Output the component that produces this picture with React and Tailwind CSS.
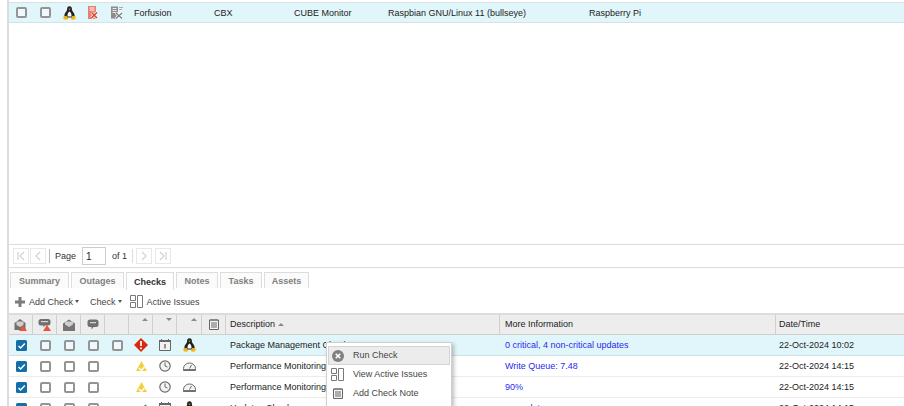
import React from "react";

const COLS = "grid grid-cols-[24px_24px_24px_24px_24px_24px_24px_25px_24px_274px_276px_1fr]";

function Box({ checked }) {
  if (checked)
    return (
      <svg width="11" height="11" viewBox="0 0 11 11" className="block">
        <rect x="0" y="0" width="11" height="11" rx="1.5" fill="#146ea8" />
        <path d="M2.5 6 L4.6 8 L8.8 3.4" fill="none" stroke="#fff" strokeWidth="1.5" />
      </svg>
    );
  return <div className="w-[11px] h-[11px] rounded-[2px] border-2 border-[#949494] bg-white/40" />;
}

const Tux = () => (
  <svg width="13" height="14" viewBox="0 0 13 14" className="block">
    <path d="M6.500 .3C4.500 .3 4 1.800 4.100 3.300 4.200 4.800 2.800 5.700 2 7.300 1.300 8.700 1.200 10.200 1.800 11.500h9.400c.6-1.300.5-2.800-.2-4.200C10.200 5.700 8.800 4.800 8.900 3.300 9 1.800 8.500 .3 6.500 .3z" fill="#222" />
    <path d="M6.500 5.500C5.200 6 4.300 8 4.500 10.500h4C8.700 8 7.800 6 6.500 5.500z" fill="#fff" />
    <path d="M5.300 2.800h2.400L6.500 4.100z" fill="#f1b312" />
    <path d="M.3 10.500 3.500 9.800l1.600 2.700-1 1.200-3.500-.5zM12.700 10.500 9.500 9.800l-1.600 2.700 1 1.200 3.500-.5z" fill="#f3b40f" />
  </svg>
);

const ServerX = () => (
  <svg width="10" height="13" viewBox="0 0 10 13" className="block">
    <path d="M0 0h8v13H0z" fill="#e8806e" />
    <path d="M1.500 2h5M1.500 4h5" stroke="#fff" strokeWidth="1" />
    <path d="M3.500 6.500 9 12M9 6.500 3.500 12" stroke="#fff" strokeWidth="3" />
    <path d="M3.500 6.500 9 12M9 6.500 3.500 12" stroke="#d9432e" strokeWidth="1.500" />
  </svg>
);

const ServerGray = () => (
  <svg width="12" height="13" viewBox="0 0 12 13" className="block">
    <path d="M0 .5h7v12H0z" fill="#8d8d8d" />
    <path d="M1.500 2.500h4M1.500 4.500h4M1.500 6.500h4" stroke="#e8e8e8" />
    <path d="M5 7 11 12.500M11 7 5 12.500" stroke="#fff" strokeWidth="3" />
    <path d="M5 7 11 12.500M11 7 5 12.500" stroke="#777" strokeWidth="1.200" />
    <path d="M8 1.500h4M8 3.500h3" stroke="#aaa" />
  </svg>
);

const MailX = () => (
  <svg width="13" height="13" viewBox="0 0 13 13" className="block">
    <path d="M.5 5 6 1l5.500 4v7H.5z" fill="#707070" />
    <path d="M2.500 3.500h7V7L6 9 2.500 7z" fill="#cfcfcf" />
    <path d="M9 7 13 13H5z" fill="#e4553f" />
  </svg>
);
const BubbleX = () => (
  <svg width="13" height="13" viewBox="0 0 13 13" className="block">
    <path d="M3 1h7a2.500 2.500 0 0 1 2.500 2.500V5A2.500 2.500 0 0 1 10 7.500H7L5.500 9.500V7.500H3A2.500 2.500 0 0 1 .5 5V3.500A2.500 2.500 0 0 1 3 1z" fill="#707070" />
    <path d="M3 3.700h7" stroke="#eee" strokeWidth="1" />
    <path d="M9 7 13 13H5z" fill="#e4553f" />
  </svg>
);
const Mail = () => (
  <svg width="12" height="12" viewBox="0 0 12 12" className="block">
    <path d="M0 4.500 6 .5l6 4V12H0z" fill="#757575" />
    <path d="M2 2.500h8v3L6 8 2 5.500z" fill="#cfcfcf" />
  </svg>
);
const Bubble = () => (
  <svg width="12" height="11" viewBox="0 0 12 11" className="block">
    <path d="M3 .5h6A2.500 2.500 0 0 1 11.500 3v2.500A2.500 2.500 0 0 1 9 8H6.500L4.500 10.500V8H3A2.500 2.500 0 0 1 .5 5.500V3A2.500 2.500 0 0 1 3 .5z" fill="#707070" />
    <path d="M3 3.700h6" stroke="#eee" />
  </svg>
);
const Notes = () => (
  <svg width="10" height="11" viewBox="0 0 10 11" className="block">
    <path d="M.5 1h9v9.500h-9z" fill="#f4f4f4" stroke="#666" />
    <path d="M2 0v2M4 0v2M6 0v2M8 0v2" stroke="#666" />
    <path d="M2 4h6M2 6h6M2 8h6" stroke="#666" />
  </svg>
);
const Up = () => <div className="w-0 h-0 border-x-[3px] border-x-transparent border-b-[3px] border-b-[#8a8a8a]" />;
const Down = () => <div className="w-0 h-0 border-x-[3px] border-x-transparent border-t-[3px] border-t-[#8a8a8a]" />;
const Diamond = () => (
  <svg width="14" height="14" viewBox="0 0 14 14" className="block">
    <path d="M7 0 14 7 7 14 0 7z" fill="#d92a0e" />
    <path d="M7 3v5M7 9.500v1.800" stroke="#fff" strokeWidth="1.700" />
  </svg>
);
const Cal = () => (
  <svg width="12" height="12" viewBox="0 0 12 12" className="block">
    <path d="M.5 1.500h11v10H.5z" fill="#f2f2f2" stroke="#666" />
    <path d="M0 1h12v2H0z" fill="#666" />
    <path d="M2.500 0v2M9.500 0v2" stroke="#666" />
    <path d="M6 5v4.500" stroke="#555" strokeWidth="1.200" />
  </svg>
);
const Warn = () => (
  <svg width="11" height="11" viewBox="0 0 11 11" className="block">
    <path d="M5.500 0 11 10H0z" fill="#f2cf3d" />
    <path d="M3 7 5.500 9.500 8.500 6" fill="none" stroke="#fff" strokeWidth="1.500" />
  </svg>
);
const Clock = () => (
  <svg width="12" height="12" viewBox="0 0 12 12" className="block">
    <circle cx="6" cy="6" r="5.200" fill="#f4f4f4" stroke="#6a6a6a" strokeWidth="1.200" />
    <path d="M6 2.500V6l2.500 1" fill="none" stroke="#6a6a6a" />
  </svg>
);
const Gauge = () => (
  <svg width="13" height="9" viewBox="0 0 13 9" className="block">
    <path d="M.5 8.500V6.500A6 5.500 0 0 1 12.500 6.500v2z" fill="#f4f4f4" stroke="#666" />
    <path d="M6.500 6.500 8.500 3" stroke="#666" />
    <path d="M.5 7h12v1.500H.5z" fill="#777" />
  </svg>
);
const Panels = () => (
  <svg width="13" height="13" viewBox="0 0 13 13" className="block">
    <path d="M.5.500h5v5h-5zM.5 7.500h5v5h-5zM7.500.500h5v12h-5z" fill="#fff" stroke="#7a7a7a" />
  </svg>
);
const XCircle = () => (
  <svg width="12" height="12" viewBox="0 0 12 12" className="block">
    <circle cx="6" cy="6" r="6" fill="#808080" />
    <path d="M3.700 3.700 8.300 8.300M8.300 3.700 3.700 8.300" stroke="#fff" strokeWidth="1.600" />
  </svg>
);
const Caret = () => <div className="w-0 h-0 border-x-[2px] border-x-transparent border-t-[3px] border-t-[#555]" />;

function HCell({ children, sort }) {
  return (
    <div
      className={
        "flex border-r border-[#cfcfcf] " +
        (sort ? "items-start justify-end pr-[4px] pt-[3px]" : "items-center justify-center")
      }
    >
      {children}
    </div>
  );
}
function Cell({ children }) {
  return <div className="flex items-center justify-center">{children}</div>;
}

function Row({ hi, extra, sev, kind, type, desc, info, date }) {
  return (
    <div
      className={
        COLS +
        " h-[21px] border-b " +
        (hi ? "bg-[#e1f6fa] border-[#cfe0e2]" : "bg-white border-[#ececec]")
      }
    >
      <Cell><Box checked /></Cell>
      <Cell><Box /></Cell>
      <Cell><Box /></Cell>
      <Cell><Box /></Cell>
      <Cell>{extra && <Box />}</Cell>
      <Cell>{sev}</Cell>
      <Cell>{kind}</Cell>
      <Cell>{type}</Cell>
      <Cell />
      <div className="flex items-center pl-[4px] pt-px text-[#222] overflow-hidden whitespace-nowrap">{desc}</div>
      <div className="flex items-center pl-[5px] pt-px text-[#2a2aee] whitespace-nowrap">{info}</div>
      <div className="flex items-center pl-[3px] pt-px text-[#222] whitespace-nowrap">{date}</div>
    </div>
  );
}

function Tab({ children, active, w }) {
  return (
    <div
      className={
        w +
        " border border-b-0 border-[#ddd] flex items-center justify-center font-bold pt-px " +
        (active ? "h-[18px] text-[#333] bg-white" : "h-[16px] text-[#808080] bg-[#fbfbfb]")
      }
    >
      {children}
    </div>
  );
}

function PageBtn({ path, className = "" }) {
  return (
    <div className={"w-[16px] h-[16px] border border-[#e8e8e8] flex items-center justify-center " + className}>
      <svg width="10" height="10" viewBox="0 0 10 10" className="block">
        <path d={path} fill="none" stroke="#d2d2d2" strokeWidth="1.200" />
      </svg>
    </div>
  );
}

function MenuItem({ icon, label, active }) {
  return (
    <div
      className={
        "flex items-center h-[19px] " +
        (active ? "bg-[#ececec] border border-[#d4d4d4]" : "pl-px")
      }
    >
      <div className="w-[17px] flex items-center justify-center">{icon}</div>
      <div className="pl-[7px] text-[#444]">{label}</div>
    </div>
  );
}

export default function App() {
  return (
    <div
      className="relative w-[904px] h-[406px] overflow-hidden bg-white text-[9px] leading-none text-[#222]"
      style={{ fontFamily: '"Liberation Sans", Arial, sans-serif' }}
    >
      <div className="h-[406px] ml-[7px] border-l-2 border-[#dcdcdc] overflow-hidden">
        {/* Upper grid */}
        <div className="h-[2px]" />
        <div className="h-[21px] bg-[#e1f6fa] border-y border-[#d6e2e4] flex items-center">
          <div className="w-[24px] flex justify-center"><Box /></div>
          <div className="w-[24px] flex justify-center"><Box /></div>
          <div className="w-[24px] flex justify-center"><Tux /></div>
          <div className="w-[24px] flex justify-center"><ServerX /></div>
          <div className="w-[24px] flex justify-center"><ServerGray /></div>
          <div className="w-[85px] pl-[5px] pt-px">Forfusion</div>
          <div className="w-[80px] pt-px">CBX</div>
          <div className="w-[94px] pt-px">CUBE Monitor</div>
          <div className="w-[201px] pt-px">Raspbian GNU/Linux 11 (bullseye)</div>
          <div className="pt-px">Raspberry Pi</div>
        </div>
        <div className="h-[221px]" />
        {/* Pagination */}
        <div className="h-[24px] border-y border-[#dcdcdc] flex items-center pl-[4px]">
          <PageBtn path="M2 1v8M8 1 4 5l4 4" />
          <PageBtn path="M7 1 3 5l4 4" className="ml-[1px]" />
          <div className="w-px h-[14px] bg-[#bbb] ml-[3px]" />
          <span className="ml-[5px] pt-px text-[#333]">Page</span>
          <div className="w-[24px] h-[18px] border border-[#ccc] ml-[6px] flex items-center pl-[3px] pt-px text-[10px]">1</div>
          <span className="ml-[6px] pt-px text-[#333]">of 1</span>
          <div className="w-px h-[14px] bg-[#ddd] ml-[5px]" />
          <PageBtn path="M3 1l4 4-4 4" className="ml-[3px]" />
          <PageBtn path="M2 1l4 4-4 4M8 1v8" className="ml-[3px]" />
        </div>
        {/* Tabs */}
        <div className="h-[22px] flex items-start pt-[4px] pl-[1px] gap-[2px]">
          <Tab w="w-[59px]">Summary</Tab>
          <Tab w="w-[53px]">Outages</Tab>
          <Tab w="w-[48px]" active>Checks</Tab>
          <Tab w="w-[42px]">Notes</Tab>
          <Tab w="w-[42px]">Tasks</Tab>
          <Tab w="w-[45px]">Assets</Tab>
        </div>
        {/* Toolbar */}
        <div className="h-[23px] flex items-center pl-[6px] text-[#444]">
          <svg width="10" height="10" viewBox="0 0 10 10" className="block">
            <path d="M3.500 0h3v3.500H10v3H6.500V10h-3V6.500H0v-3h3.500z" fill="#7c7c7c" />
          </svg>
          <span className="ml-[4px] pt-px">Add Check</span>
          <span className="ml-[2px]"><Caret /></span>
          <span className="ml-[11px] pt-px">Check</span>
          <span className="ml-[2px]"><Caret /></span>
          <span className="ml-[8px]"><Panels /></span>
          <span className="ml-[4px] pt-px">Active Issues</span>
        </div>
        {/* Header */}
        <div className={COLS + " h-[22px] bg-[#ededed] border-t-2 border-b border-t-[#dcdcdc] border-b-[#cfcfcf]"}>
          <HCell><MailX /></HCell>
          <HCell><BubbleX /></HCell>
          <HCell><Mail /></HCell>
          <HCell><Bubble /></HCell>
          <HCell />
          <HCell sort><Up /></HCell>
          <HCell sort><Down /></HCell>
          <HCell sort><Up /></HCell>
          <HCell><Notes /></HCell>
          <div className="flex items-center pl-[4px] border-r border-[#cfcfcf] gap-[3px]">
            <span>Description</span>
            <Up />
          </div>
          <div className="flex items-center pl-[5px] border-r border-[#cfcfcf]">More Information</div>
          <div className="flex items-center pl-[3px]">Date/Time</div>
        </div>
        <Row hi extra sev={<Diamond />} kind={<Cal />} type={<Tux />} desc="Package Management Check" info="0 critical, 4 non-critical updates" date="22-Oct-2024 10:02" />
        <Row sev={<Warn />} kind={<Clock />} type={<Gauge />} desc="Performance Monitoring" info="Write Queue: 7.48" date="22-Oct-2024 14:15" />
        <Row sev={<Warn />} kind={<Clock />} type={<Gauge />} desc="Performance Monitoring" info="90%" date="22-Oct-2024 14:15" />
        <Row sev={<svg width="11" height="11" viewBox="0 0 11 11"><path d="M2 6l3 3 5-7" fill="none" stroke="#2e9e3a" strokeWidth="2" /></svg>} kind={<Cal />} type={<Tux />} desc="Updates Check" info="no updates" date="22-Oct-2024 14:15" />
      </div>
      {/* Context menu */}
      <div className="absolute left-[326px] top-[342px] w-[126px] h-[70px] bg-white border border-[#cfcfcf] shadow-[2px_2px_4px_rgba(0,0,0,0.25)] px-px pt-[3px]">
        <MenuItem active icon={<XCircle />} label="Run Check" />
        <MenuItem icon={<Panels />} label="View Active Issues" />
        <MenuItem icon={<Notes />} label="Add Check Note" />
      </div>
    </div>
  );
}
